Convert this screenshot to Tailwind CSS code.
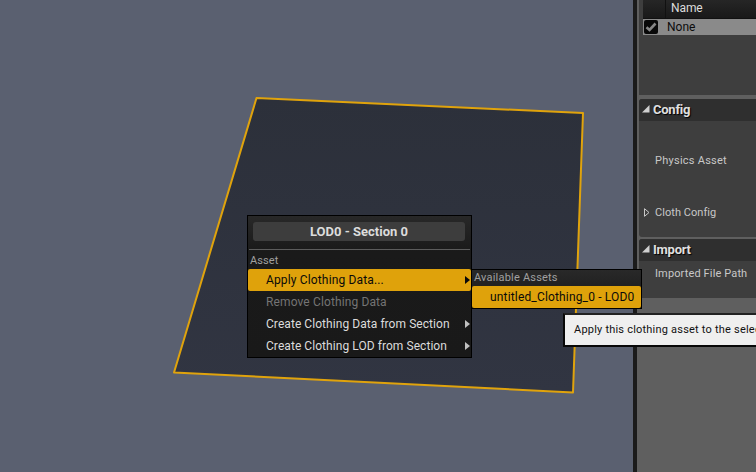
<!DOCTYPE html>
<html lang="en">
<head>
<meta charset="utf-8">
<title>Clothing Editor</title>
<script src="https://cdn.jsdelivr.net/npm/@tailwindcss/browser@4"></script>
</head>
<body class="relative w-[756px] h-[472px] overflow-hidden bg-[#5a6070] font-[Roboto,sans-serif] text-[12px] text-[#dcdcdc] whitespace-nowrap">
<div class="flex h-full w-full">
  <!-- viewport -->
  <main class="w-[633px] h-full shrink-0 bg-[#5a6070]">
    <svg class="block" width="633" height="472" viewBox="0 0 633 472">
      <defs><linearGradient id="cloth" x1="0" y1="0" x2="0" y2="1"><stop offset="0" stop-color="#2c303a"/><stop offset="1" stop-color="#313542"/></linearGradient></defs>
      <path d="M256.500 98 L583 113 L573 392.500 L174 372.500 Z" fill="url(#cloth)" stroke="#e0a30c" stroke-width="2" stroke-linejoin="round"/>
    </svg>
  </main>
  <div class="w-1 h-full shrink-0 bg-[#1b1b1b]"></div>
  <!-- details panel -->
  <aside class="flex-1 min-w-0 h-full bg-[#5f5f5f] pl-0.5">
    <section class="h-[95px] bg-[#3e3e3e] pl-1">
      <div class="flex h-[19px] bg-linear-to-b from-[#262626] to-[#191919] border-b border-[#111]">
        <div class="w-[23px] border-r border-[#111]"></div>
        <div class="pl-[5px] leading-4 tracking-[-0.1px]">Name</div>
      </div>
      <div class="flex h-4 items-center bg-[#8a8a8a] text-[#0c0c0c]">
        <div class="ml-px flex w-[14px] h-[14px] items-center justify-center rounded-[2px] bg-[#080808]">
          <svg width="12" height="12" viewBox="0 0 12 12"><path d="M1.500 6.300 L4.500 9 L10.500 2.500" fill="none" stroke="#858585" stroke-width="2.600"/></svg>
        </div>
        <div class="pl-[9px] leading-4">None</div>
      </div>
    </section>
    <section class="mt-1 h-[138px] rounded-l-[3px] bg-[#3e3e3e] overflow-hidden text-[11px] text-[#c8c8c8]">
      <h2 class="flex h-[22px] items-center bg-[#2f2f2f] pl-[3px] text-[13px] font-bold text-[#e0e0e0] [text-shadow:1px_1px_1px_#000]">
        <svg class="-mt-0.5" width="8" height="8" viewBox="0 0 8 8"><path d="M7.500 0V7.500H0Z" fill="#d0d0d0"/></svg>
        <span class="pl-[3px] tracking-[-0.25px]">Config</span>
      </h2>
      <div class="mt-8 pl-4 leading-4 tracking-[0.25px]">Physics Asset</div>
      <div class="mt-9 flex items-center pl-[5px] leading-4 tracking-[0.05px]">
        <svg class="-mt-0.5" width="7" height="9" viewBox="0 0 7 9"><path d="M.5 .7V8.300L5 4.500Z" fill="none" stroke="#c8c8c8"/></svg>
        <span class="pl-1">Cloth Config</span>
      </div>
    </section>
    <section class="mt-0.5 h-[59px] rounded-l-[3px] bg-[#3e3e3e] overflow-hidden text-[11px] text-[#c8c8c8]">
      <h2 class="flex h-[22px] items-center bg-[#2f2f2f] pl-[3px] text-[13px] font-bold text-[#e0e0e0] [text-shadow:1px_1px_1px_#000]">
        <svg class="-mt-0.5" width="8" height="8" viewBox="0 0 8 8"><path d="M7.500 0V7.500H0Z" fill="#d0d0d0"/></svg>
        <span class="pl-[3px] tracking-[-0.25px]">Import</span>
      </h2>
      <div class="mt-[5px] pl-4 leading-4 tracking-[0.13px]">Imported File Path</div>
    </section>
  </aside>
</div>

<!-- context menu -->
<div class="absolute left-[247px] top-[215px] flex flex-col w-[225px] h-[143px] border border-black bg-linear-to-b from-[#282828] from-0% via-[#1a1a1a] via-25% to-[#191919]">
  <div class="mt-[6px] ml-[5px] mr-[6px] h-[19px] shrink-0 rounded-[3px] bg-[#3d3d3d] text-center text-[13px] leading-[19px] font-bold">LOD0 - Section 0</div>
  <div class="mt-2 mx-px h-px shrink-0 bg-[#5c5c5c]"></div>
  <div class="mt-[3px] pl-0.5 h-4 leading-4 text-[11px] tracking-[0.1px] text-[#a0a0a0]">Asset</div>
  <div class="flex h-[22px] shrink-0 items-center justify-between rounded-[2px] bg-[#dfa20b] pl-[18px] pr-px text-[#0a0a0a]"><span class="tracking-[0.15px]">Apply Clothing Data...</span><svg width="5" height="8" viewBox="0 0 5 8"><path d="M0 0L5 4L0 8Z" fill="#0a0a0a"/></svg></div>
  <div class="flex h-[22px] shrink-0 items-center pl-[18px] tracking-[0.12px] text-[#747474]">Remove Clothing Data</div>
  <div class="flex h-[22px] shrink-0 items-center justify-between pl-[18px] pr-px"><span class="tracking-[0.06px]">Create Clothing Data from Section</span><svg width="5" height="8" viewBox="0 0 5 8"><path d="M0 0L5 4L0 8Z" fill="#c0c0c0"/></svg></div>
  <div class="flex h-[22px] shrink-0 items-center justify-between pl-[18px] pr-px"><span class="tracking-[0.06px]">Create Clothing LOD from Section</span><svg width="5" height="8" viewBox="0 0 5 8"><path d="M0 0L5 4L0 8Z" fill="#c0c0c0"/></svg></div>
</div>

<!-- submenu -->
<div class="absolute left-[471px] top-[269px] w-[171px] h-10 border border-black bg-linear-to-b from-[#292929] to-[#171717]">
  <div class="h-4 pl-0.5 leading-4 text-[11px] tracking-[0.2px] text-[#a0a0a0]">Available Assets</div>
  <div class="h-[22px] rounded-[2px] bg-[#dfa20b] pl-[18px] leading-[22px] tracking-[0.16px] text-[#0a0a0a]">untitled_Clothing_0 - LOD0</div>
</div>

<!-- tooltip -->
<div class="absolute left-[563px] top-[313px] w-[193px] h-[34px] overflow-hidden border-y-2 border-l-2 border-t-[#222] border-b-[#080808] border-l-[#080808] bg-[#efefef] pl-[9px] leading-[30px] text-[11px] tracking-[0.21px] text-[#111]">Apply this clothing asset to the selec</div>
</body>
</html>
